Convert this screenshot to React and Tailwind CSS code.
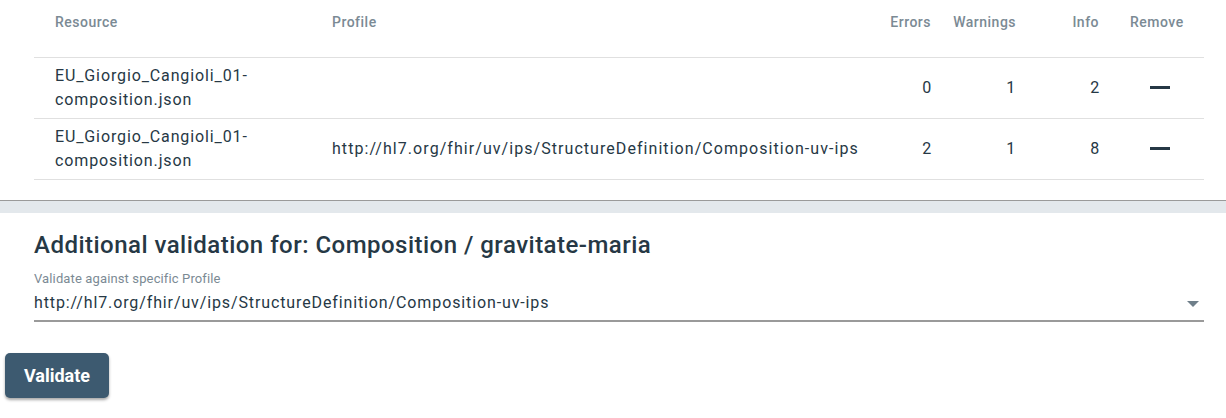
import React from "react";

const rows = [
  { res: ["EU_Giorgio_Cangioli_01-", "composition.json"], profile: "", e: 0, w: 1, i: 2 },
  {
    res: ["EU_Giorgio_Cangioli_01-", "composition.json"],
    profile: "http://hl7.org/fhir/uv/ips/StructureDefinition/Composition-uv-ips",
    e: 2,
    w: 1,
    i: 8,
  },
];

export default function App() {
  return (
    <div className="w-[1226px] h-[418px] bg-white overflow-hidden text-[#263845]" style={{ fontFamily: "Roboto, 'Liberation Sans', sans-serif" }}>
      <div className="h-[200px] pl-[34px] pr-[22px]">
        <table className="w-[1170px] table-fixed border-collapse">
          <colgroup>
            <col className="w-[278px]" />
            <col className="w-[568px]" />
            <col className="w-[67px]" />
            <col className="w-[85px]" />
            <col className="w-[83px]" />
            <col className="w-[89px]" />
          </colgroup>
          <thead>
            <tr className="h-[57px] border-b border-[#e0e0e0] text-[14px] tracking-[0.035em] font-medium text-[#7b8a94] align-top">
              <th className="pl-[21px] pt-[12px] text-left font-medium">Resource</th>
              <th className="pl-[20px] pt-[12px] text-left font-medium">Profile</th>
              <th className="pr-[16px] pt-[12px] text-right font-medium">Errors</th>
              <th className="pr-[16px] pt-[12px] text-right font-medium">Warnings</th>
              <th className="pr-[16px] pt-[12px] text-right font-medium">Info</th>
              <th className="pl-[15px] pt-[12px] text-left font-medium">Remove</th>
            </tr>
          </thead>
          <tbody>
            {rows.map((r, idx) => (
              <tr key={idx} className="h-[61px] border-b border-[#e0e0e0] text-[16px] leading-[24px] tracking-[0.055em]">
                <td className="pl-[21px]">
                  <div>{r.res[0]}</div>
                  <div>{r.res[1]}</div>
                </td>
                <td className="pl-[20px] whitespace-nowrap tracking-[0.066em]">{r.profile}</td>
                <td className="pr-[15px] text-right">{r.e}</td>
                <td className="pr-[16px] text-right">{r.w}</td>
                <td className="pr-[15px] text-right">{r.i}</td>
                <td className="pl-[35px]">
                  <div className="w-[20px] h-[3px] bg-[#263845]" />
                </td>
              </tr>
            ))}
          </tbody>
        </table>
      </div>
      <div className="h-[13px] border-t border-[#9a9a9a] bg-[#e3e8ec]" />
      <div className="pl-[34px] pr-[22px] pt-[18px]">
        <h2 className="text-[24px] leading-[28px] font-medium tracking-[0.02em] text-[#263845]">
          Additional validation for: Composition / gravitate-maria
        </h2>
        <div className="mt-[13px] text-[13px] leading-[14px] tracking-[0.01em] text-[#7b8a94]">Validate against specific Profile</div>
        <div className="flex items-start justify-between h-[36px] pt-[5px] border-b-2 border-[#9a9a9a]">
          <span className="text-[16px] leading-[24px] tracking-[0.055em]">
            http://hl7.org/fhir/uv/ips/StructureDefinition/Composition-uv-ips
          </span>
          <svg width="12" height="6" viewBox="0 0 12 6" className="mr-[5px] mt-[10px]">
            <path d="M0 0 L12 0 L6 6 Z" fill="#6f7f8a" />
          </svg>
        </div>
      </div>
      <div className="pl-[5px] pt-[31px]">
        <button className="w-[104px] h-[45px] rounded-[5px] bg-[#3d5a70] text-white text-[18px] font-bold shadow-[0_2px_3px_rgba(0,0,0,0.35)]">
          Validate
        </button>
      </div>
    </div>
  );
}
